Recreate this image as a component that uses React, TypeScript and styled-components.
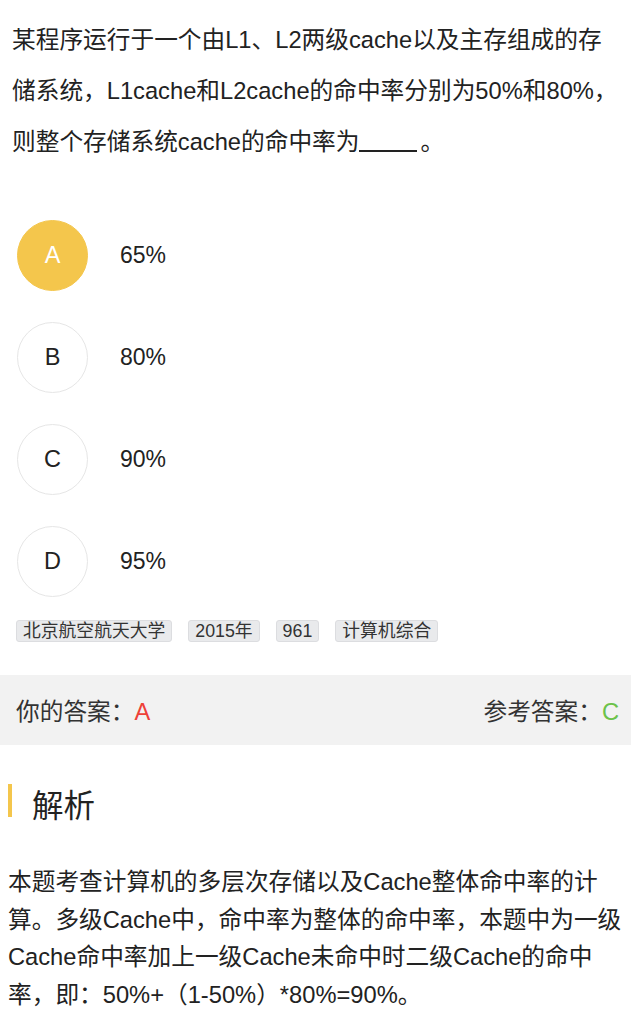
import React from 'react';
import styled, { createGlobalStyle } from 'styled-components';

const GlobalStyle = createGlobalStyle`
    html, body {
        margin: 0;
        padding: 0;
        background: #ffffff;
    }
    body {
        font-family: 'Liberation Sans', 'Noto Sans CJK SC', sans-serif;
        color: #222222;
    }
`;

const options = [
    { key: 'A', text: '65%' },
    { key: 'B', text: '80%' },
    { key: 'C', text: '90%' },
    { key: 'D', text: '95%' },
];

const tags = ['北京航空航天大学', '2015年', '961', '计算机综合'];

const App = () => {
    const chosen = 'A';
    return (
        <>
            <GlobalStyle />
            <Page>
                <Question>
                    某程序运行于一个由L1、L2两级cache以及主存组成的存储系统，L1cache和L2cache的命中率分别为50%和80%，
                    <span>则整个存储系统cache的命中率为</span>
                    <Blank />
                    <span>。</span>
                </Question>
                <OptionList>
                    {options.map((o) => (
                        <OptionRow key={o.key}>
                            <Circle $active={o.key === chosen}>{o.key}</Circle>
                            <OptionText>{o.text}</OptionText>
                        </OptionRow>
                    ))}
                </OptionList>
                <TagRow>
                    {tags.map((t) => (
                        <Tag key={t}>{t}</Tag>
                    ))}
                </TagRow>
                <AnswerBar>
                    <span>
                        你的答案：<Mark $color="#ee4138">A</Mark>
                    </span>
                    <span>
                        参考答案：<Mark $color="#6cc24a">C</Mark>
                    </span>
                </AnswerBar>
                <SectionTitle>解析</SectionTitle>
                <Analysis>
                    本题考查计算机的多层次存储以及Cache整体命中率的计算。多级Cache中，命中率为整体的命中率，本题中为一级Cache命中率加上一级Cache未命中时二级Cache的命中率，即：50%+（1-50%）*80%=90%。
                </Analysis>
            </Page>
        </>
    );
};

const Page = styled.div`
    width: 631px;
    display: flex;
    flex-direction: column;
`;

const Question = styled.div`
    padding: 15px 12px 0 12px;
    font-size: 23.7px;
    line-height: 51px;
    color: #222222;
`;

const Blank = styled.span`
    display: inline-block;
    width: 58px;
    height: 2px;
    margin: 0 3px 0 0;
    background: #222222;
    vertical-align: -2px;
`;

const OptionList = styled.div`
    margin-top: 52px;
    padding-left: 17px;
    display: flex;
    flex-direction: column;
    gap: 31px;
`;

const OptionRow = styled.div`
    display: flex;
    align-items: center;
    gap: 32px;
`;

const Circle = styled.div<{ $active: boolean }>`
    width: 71px;
    height: 71px;
    box-sizing: border-box;
    border-radius: 50%;
    display: flex;
    align-items: center;
    justify-content: center;
    font-size: 23.5px;
    color: ${(p) => (p.$active ? '#ffffff' : '#222222')};
    background: ${(p) => (p.$active ? '#f4c64c' : '#ffffff')};
    border: 1px solid ${(p) => (p.$active ? '#f4c64c' : '#e6e6e6')};
`;

const OptionText = styled.div`
    font-size: 23px;
    color: #222222;
`;

const TagRow = styled.div`
    margin-top: 23px;
    padding-left: 16px;
    display: flex;
    gap: 16px;
`;

const Tag = styled.div`
    font-size: 17.8px;
    line-height: 20px;
    padding: 0 6px;
    background: #e9eaec;
    border: 1px solid #dcdde0;
    border-radius: 3px;
    color: #333333;
`;

const AnswerBar = styled.div`
    margin-top: 33px;
    height: 70px;
    padding: 0 12px 0 16px;
    background: #f2f2f2;
    display: flex;
    align-items: center;
    justify-content: space-between;
    font-size: 23.7px;
    color: #333333;
`;

const Mark = styled.span<{ $color: string }>`
    color: ${(p) => p.$color};
`;

const SectionTitle = styled.div`
    margin: 39px 0 0 8px;
    height: 33px;
    padding-left: 20px;
    border-left: 4px solid #f4c64c;
    display: flex;
    align-items: center;
    font-size: 31.5px;
    padding-top: 4px;
    box-sizing: border-box;
    color: #222222;
`;

const Analysis = styled.div`
    margin-top: 47px;
    padding: 0 8px;
    font-size: 23.7px;
    line-height: 37.5px;
    color: #222222;
`;

export default App;
